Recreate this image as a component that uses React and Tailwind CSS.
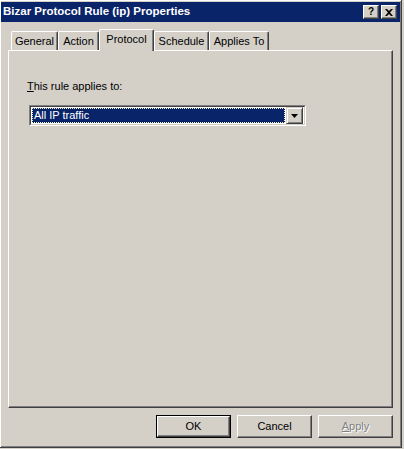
import React from "react";

const tabs = ["General", "Action", "Protocol", "Schedule", "Applies To"];
const tabWidths = { General: "w-[47px]", Action: "w-[41px]", Protocol: "w-[55px]", Schedule: "w-[55px]", "Applies To": "w-[60px]" };

function Tab({ label, active }) {
  if (active) {
    return (
      <div className={`${tabWidths[label]} h-[22px] -mb-[1px] relative z-10 bg-[#d4d0c8] border-l border-t border-white border-r border-r-[#404040] shadow-[inset_-1px_0_0_#808080] rounded-t-[2px] flex items-start justify-center pt-[4px]`}>
        {label}
      </div>
    );
  }
  return (
    <div className={`${tabWidths[label]} h-[19px] bg-[#d4d0c8] border-l border-t border-white border-r border-r-[#404040] shadow-[inset_-1px_0_0_#808080] rounded-t-[2px] flex items-start justify-center pt-[4px]`}>
      {label}
    </div>
  );
}

function Button({ children, isDefault, disabled }) {
  const bevel = "border border-t-white border-l-white border-r-[#404040] border-b-[#404040] shadow-[inset_-1px_-1px_0_#808080]";
  return (
    <div className={`w-[75px] h-[23px] ${isDefault ? "border border-black" : ""} flex`}>
      <div className={`flex-1 ${bevel} flex items-center justify-center ${disabled ? "text-[#808080] [text-shadow:1px_1px_0_#fff]" : "text-black"}`}>
        {children}
      </div>
    </div>
  );
}

export default function App() {
  return (
    <div className="w-[404px] h-[449px] bg-[#d4d0c8] font-['Liberation_Sans',Arial,sans-serif] text-[11px] text-black leading-none">
      {/* window frame */}
      <div className="w-[402px] h-[448px] flex flex-col bg-[#d4d0c8] border-r border-b border-[#404040] shadow-[inset_1px_1px_0_#fff,inset_-1px_-1px_0_#808080] pt-[2px] pl-[1px] pr-[1px]">
        {/* title bar */}
        <div className="h-[20px] bg-[#0a246a] flex items-center justify-between pl-[2px] pr-[3px]">
          <span className="text-white font-bold text-[11.5px]">Bizar Protocol Rule (ip) Properties</span>
          <div className="flex gap-[2px]">
            <div className="w-[16px] h-[14px] bg-[#d4d0c8] border border-t-white border-l-white border-r-[#404040] border-b-[#404040] shadow-[inset_-1px_-1px_0_#808080] flex items-center justify-center font-bold text-[10px]">?</div>
            <div className="w-[16px] h-[14px] bg-[#d4d0c8] border border-t-white border-l-white border-r-[#404040] border-b-[#404040] shadow-[inset_-1px_-1px_0_#808080] flex items-center justify-center">
              <svg width="8" height="7" viewBox="0 0 8 7">
                <path d="M0 0h2l2 2 2-2h2L5 3.5 8 7H6L4 5 2 7H0l3-3.5z" fill="#000" />
              </svg>
            </div>
          </div>
        </div>

        {/* tab strip */}
        <div className="h-[28px] flex items-end pl-[10px]">
          {tabs.map((t) => (
            <Tab key={t} label={t} active={t === "Protocol"} />
          ))}
        </div>

        {/* tab panel */}
        <div className="ml-[7px] w-[385px] h-[358px] border-l border-t border-white border-r border-b border-r-[#404040] border-b-[#404040] shadow-[inset_-1px_-1px_0_#808080] pt-[30px] pl-[18px]">
          <div>
            <span className="underline">T</span>his rule applies to:
          </div>
          <div className="mt-[13px] ml-[2px] w-[277px] h-[21px] border border-t-[#808080] border-l-[#808080] border-r-white border-b-white">
            <div className="w-full h-full border border-t-[#404040] border-l-[#404040] border-r-[#d4d0c8] border-b-[#d4d0c8] bg-white flex items-center p-[1px]">
              <div className="flex-1 h-full bg-[#0a246a] border border-dotted border-[#f5f0c0] text-white flex items-center pl-[1px]">
                All IP traffic
              </div>
              <div className="w-[17px] h-[17px] ml-[1px] bg-[#d4d0c8] border border-t-[#d4d0c8] border-l-[#d4d0c8] border-r-[#404040] border-b-[#404040] shadow-[inset_1px_1px_0_#fff,inset_-1px_-1px_0_#808080] flex items-center justify-center">
                <svg width="7" height="4" viewBox="0 0 7 4">
                  <path d="M0 0h7L3.5 4z" fill="#000" />
                </svg>
              </div>
            </div>
          </div>
        </div>

        {/* buttons */}
        <div className="flex justify-end gap-[6px] mt-[7px] pr-[7px]">
          <Button isDefault>OK</Button>
          <Button>Cancel</Button>
          <Button disabled>
            <span>
              <span className="underline">A</span>pply
            </span>
          </Button>
        </div>
      </div>
    </div>
  );
}
